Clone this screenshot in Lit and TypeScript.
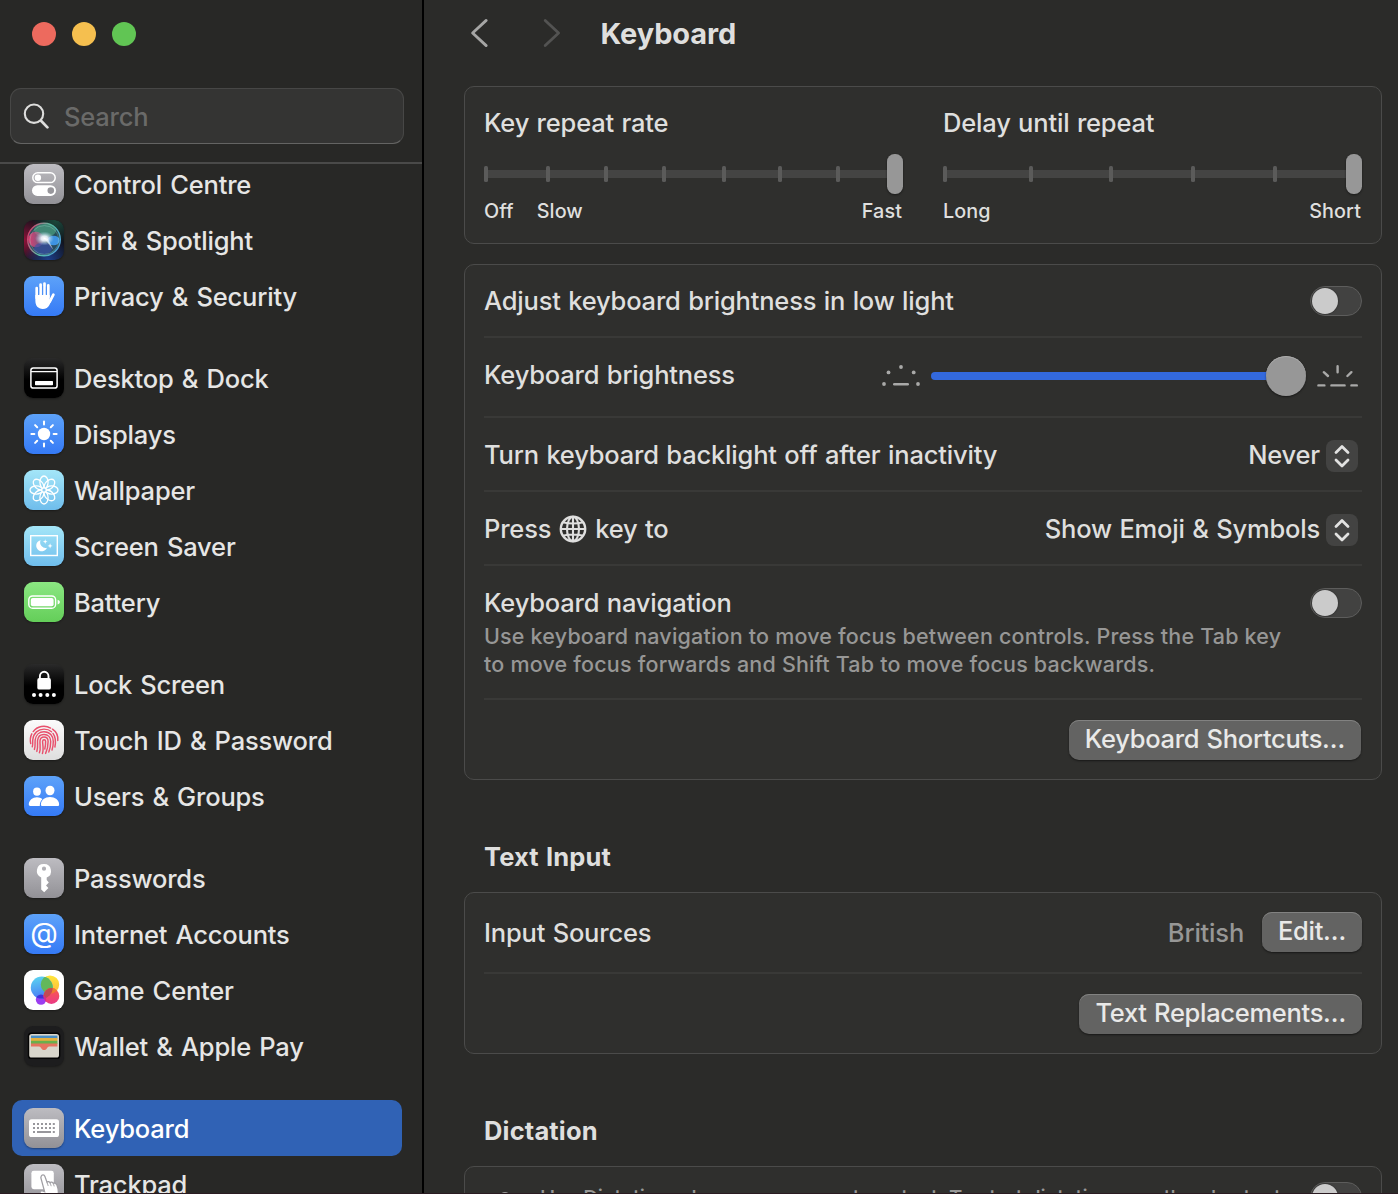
import { LitElement, html, css, svg, nothing } from "lit";
import { customElement, property } from "lit/decorators.js";
import { classMap } from "lit/directives/class-map.js";

interface SidebarEntry {
  label: string;
  icon: string;
  selected?: boolean;
}

const GROUPS: SidebarEntry[][] = [
  [
    { label: "Control Centre", icon: "control" },
    { label: "Siri & Spotlight", icon: "siri" },
    { label: "Privacy & Security", icon: "privacy" },
  ],
  [
    { label: "Desktop & Dock", icon: "desktop" },
    { label: "Displays", icon: "displays" },
    { label: "Wallpaper", icon: "wallpaper" },
    { label: "Screen Saver", icon: "saver" },
    { label: "Battery", icon: "battery" },
  ],
  [
    { label: "Lock Screen", icon: "lock" },
    { label: "Touch ID & Password", icon: "touch" },
    { label: "Users & Groups", icon: "users" },
  ],
  [
    { label: "Passwords", icon: "key" },
    { label: "Internet Accounts", icon: "at" },
    { label: "Game Center", icon: "game" },
    { label: "Wallet & Apple Pay", icon: "wallet" },
  ],
  [
    { label: "Keyboard", icon: "keyboard", selected: true },
    { label: "Trackpad", icon: "trackpad" },
  ],
];

const rays = [0, 45, 90, 135, 180, 225, 270, 315];

const GLYPHS: Record<string, unknown> = {
  control: svg`
    <rect x="8.8" y="8.8" width="22.4" height="9.8" rx="4.9" fill="none" stroke="#fff" stroke-width="1.5"/>
    <circle cx="13.9" cy="13.7" r="3.2" fill="#fff"/>
    <rect x="8" y="21.3" width="24" height="10.6" rx="5.3" fill="#fff"/>
    <circle cx="26.8" cy="26.6" r="3.3" fill="#98979c"/>`,
  siri: svg`
    <defs>
      <radialGradient id="s1" cx="0" cy="0.5" r="0.6"><stop offset="0" stop-color="#8f1239"/><stop offset="1" stop-color="#8f1239" stop-opacity="0"/></radialGradient>
      <radialGradient id="s2" cx="0.8" cy="0" r="0.6"><stop offset="0" stop-color="#1c4a3c"/><stop offset="1" stop-color="#1c4a3c" stop-opacity="0"/></radialGradient>
      <radialGradient id="s3" cx="0.6" cy="1" r="0.6"><stop offset="0" stop-color="#1d3f8c"/><stop offset="1" stop-color="#1d3f8c" stop-opacity="0"/></radialGradient>
      <radialGradient id="s4"><stop offset="0" stop-color="#fff"/><stop offset="0.35" stop-color="#f0f8ff" stop-opacity="0.9"/><stop offset="1" stop-color="#a8d0e8" stop-opacity="0"/></radialGradient>
      <linearGradient id="s5" x1="0" x2="1" y1="0.3" y2="0.7"><stop offset="0" stop-color="#d2406e"/><stop offset="0.5" stop-color="#5cc0a4"/><stop offset="1" stop-color="#4aa0dc"/></linearGradient>
      <linearGradient id="s6" x1="0" x2="1"><stop offset="0" stop-color="#e0386c"/><stop offset="1" stop-color="#c86ca8" stop-opacity="0.3"/></linearGradient>
    </defs>
    <rect width="40" height="40" rx="9" fill="#11121b"/>
    <rect width="40" height="40" rx="9" fill="url(#s1)"/>
    <rect width="40" height="40" rx="9" fill="url(#s2)"/>
    <rect width="40" height="40" rx="9" fill="url(#s3)"/>
    <circle cx="20" cy="19.5" r="16.3" fill="#2e5a68" fill-opacity="0.75" stroke="url(#s5)" stroke-width="1.4"/>
    <ellipse cx="21" cy="10.5" rx="11" ry="6.6" fill="#4fa886" fill-opacity="0.65"/>
    <circle cx="12" cy="19.5" r="7.8" fill="url(#s6)"/>
    <ellipse cx="29.5" cy="20.5" rx="6.2" ry="4.8" fill="#3f97ea" fill-opacity="0.95"/>
    <ellipse cx="19" cy="28.5" rx="9" ry="6" fill="#3a4fae" fill-opacity="0.6"/>
    <circle cx="20.4" cy="20" r="14.4" fill="none" stroke="#9adfd0" stroke-opacity="0.4" stroke-width="0.8"/>
    <ellipse cx="20.5" cy="18.5" rx="9.5" ry="7" fill="url(#s4)"/>
    <path d="M19 17L29.5 30L24 19Z" fill="#fff" fill-opacity="0.55"/>`,
  privacy: svg`
    <g stroke="#fff" stroke-linecap="round" fill="none">
      <path d="M12.7 12V22M16.6 8.6V20M20.5 7.6V20M24.3 9.4V21" stroke-width="2.7"/>
      <path d="M29.4 18.6L25.8 25.6" stroke-width="2.7"/>
    </g>
    <path d="M11.35 19H25.7V23.5L28 22.5C27.2 25 26.4 27.3 25.4 29C23.9 31.7 22 33 18.8 33C14 33 11.35 29.8 11.35 24.6Z" fill="#fff"/>
    <path d="M14.65 11V18.5M18.55 10V18M22.4 10.5V18.5" stroke="#4c90f7" stroke-width="1.1"/>`,
  desktop: svg`
    <rect x="6.9" y="9.9" width="26.2" height="20.2" rx="2.4" fill="none" stroke="#fff" stroke-width="1.5"/>
    <path d="M7 13.6H33" stroke="#fff" stroke-width="1.2"/>
    <rect x="11" y="23" width="18" height="4.2" rx="0.8" fill="#fff"/>`,
  displays: svg`
    <circle cx="20" cy="20" r="6.2" fill="#fff"/>
    ${rays.map((a) => svg`<path d="M20 7.4V10.4" transform="rotate(${a} 20 20)" stroke="#fff" stroke-width="2" stroke-linecap="round"/>`)}`,
  wallpaper: svg`
    <g fill="none" stroke="#fff" stroke-width="1.3">
      ${rays.map((a) => svg`<ellipse cx="20" cy="12.3" rx="4.1" ry="6.3" transform="rotate(${a} 20 20)"/>`)}
    </g>
    <circle cx="20" cy="20" r="2.2" fill="#8acdf0" stroke="#fff" stroke-width="1.2"/>`,
  saver: svg`
    <rect x="6.7" y="9.7" width="26.6" height="19.8" fill="none" stroke="#fff" stroke-width="1.4"/>
    <path d="M16.6 14.2A5.6 5.6 0 1 0 23 21.8A5.6 5.6 0 0 1 16.6 14.2Z" fill="#fff"/>
    <path d="M21.2 13.2L21.8 15.1L23.5 15.7L21.8 16.3L21.2 18.1L20.6 16.3L18.9 15.7L20.6 15.1Z" fill="#fff"/>
    <path d="M26.1 17.2L26.8 19.2L28.7 19.9L26.8 20.6L26.1 22.5L25.4 20.6L23.5 19.9L25.4 19.2Z" fill="#fff"/>`,
  battery: svg`
    <rect x="4.8" y="14" width="26.8" height="12.2" rx="3.8" fill="none" stroke="#fff" stroke-width="1.4"/>
    <rect x="6.8" y="16" width="22.8" height="8.2" rx="2" fill="#fff"/>
    <path d="M33.6 17.8C36.6 18.6 36.6 21.6 33.6 22.4Z" fill="#fff"/>`,
  lock: svg`
    <path d="M15.9 15V12.3A4.3 4.6 0 0 1 24.5 12.3V15" fill="none" stroke="#fff" stroke-width="1.9"/>
    <rect x="13.3" y="14" width="13.6" height="11.6" rx="1.9" fill="#fff"/>
    ${[10, 16.6, 23.3, 29.9].map((x) => svg`<circle cx="${x}" cy="30.9" r="2" fill="#fff"/>`)}`,
  touch: svg`
    <g fill="none" stroke="#e8506c" stroke-width="1.45" stroke-linecap="round">
      <path d="M9.2 11.6A13.4 13.4 0 0 1 26.6 8.1"/>
      <path d="M28.5 9.2C32.4 11.8 34.2 16 33.8 20.5"/>
      <path d="M6.7 23.6C5.9 19.6 6.3 16.6 7.8 13.8"/>
      <path d="M8.3 26.8C9 24.9 8.5 22.3 8.8 19.6C9.5 12.9 14.2 9.1 20 9.1C23 9.1 25.6 10 27.5 11.7"/>
      <path d="M29 13.4C32 17.6 31.8 22.8 30.9 27"/>
      <path d="M10.4 29.4C11.6 26.5 10.8 23 11.2 19.9C11.8 14.8 15.4 11.8 20 11.8C25.8 11.8 29.3 16 29.3 21.4C29.3 24.5 28.9 27.4 28 30"/>
      <path d="M12.8 31.4C14.3 27.8 13.2 23.6 13.6 20.2C14 16.6 16.6 14.4 20 14.4C24.2 14.4 26.7 17.4 26.7 21.4C26.7 25.4 26 29 24.8 32"/>
      <path d="M15.4 32.8C17 29 15.7 24.4 16 20.9C16.2 18.5 17.8 17 20 17C22.6 17 24.1 18.9 24.1 21.4C24.1 25.8 23.2 30 21.6 33.4"/>
      <path d="M18.4 33.5C20 29.4 18.5 24 18.6 21.3C18.8 19.2 21.5 19.2 21.6 21.4C21.7 24.4 21.3 27 20.8 29"/>
    </g>`,
  users: svg`
    <ellipse cx="13" cy="15.6" rx="3.9" ry="4.2" fill="#fff"/>
    <path d="M4.8 28.6C4.8 24.4 8.6 21.3 13 21.3C15.2 21.3 17 22 18.4 23.2C16.6 24.8 15.8 26.8 15.8 30H6.4C5.3 30 4.8 29.6 4.8 28.6Z" fill="#fff"/>
    <ellipse cx="26" cy="14.5" rx="4.5" ry="4.8" fill="#fff"/>
    <path d="M16.9 28.4C16.9 24.2 21 21 26 21C31 21 35.1 24.2 35.1 28.4C35.1 29.6 34.5 30 33.4 30H18.6C17.5 30 16.9 29.6 16.9 28.4Z" fill="#fff"/>`,
  key: svg`
    <path fill-rule="evenodd" d="M20 6.1A6.9 6.9 0 0 0 17.2 19.4V31.4L20.2 34.3L24.4 30L22 27.4L24.8 24.5L22.7 22V19.4A6.9 6.9 0 0 0 20 6.1ZM20 8.6A2.1 2.1 0 1 1 20 12.8A2.1 2.1 0 0 1 20 8.6Z" fill="#fff"/>`,
  at: svg`<text x="20" y="29.2" text-anchor="middle" font-family="Inter, sans-serif" font-size="28.5" font-weight="400" letter-spacing="0" fill="#fff">@</text>`,
  game: svg`
    <defs>
      <linearGradient id="g1" x1="0" x2="0.2" y1="0" y2="1"><stop offset="0" stop-color="#5bd8f0"/><stop offset="1" stop-color="#4b7ff5"/></linearGradient>
      <linearGradient id="g2" x1="0" x2="0" y1="0" y2="1"><stop offset="0" stop-color="#ffe63b"/><stop offset="1" stop-color="#fbb83a"/></linearGradient>
      <linearGradient id="g3" x1="0" x2="0" y1="0" y2="1"><stop offset="0" stop-color="#fb5a4a"/><stop offset="1" stop-color="#ea3a86"/></linearGradient>
      <clipPath id="gb"><circle cx="17.8" cy="17.6" r="11"/></clipPath>
      <clipPath id="gr"><circle cx="27.4" cy="26" r="7.9"/></clipPath>
    </defs>
    <circle cx="17" cy="29.6" r="5.2" fill="#9b3df0"/>
    <circle cx="26" cy="14.6" r="9.2" fill="url(#g2)"/>
    <circle cx="17.8" cy="17.6" r="11" fill="url(#g1)"/>
    <g clip-path="url(#gb)"><circle cx="26" cy="14.6" r="9.2" fill="#63b85a"/><circle cx="17" cy="29.6" r="5.2" fill="#4430d8"/></g>
    <circle cx="27.4" cy="26" r="7.9" fill="url(#g3)"/>
    <g clip-path="url(#gr)"><circle cx="26" cy="14.6" r="9.2" fill="#ef7a32"/><circle cx="17.8" cy="17.6" r="11" fill="#c44a52"/><circle cx="17" cy="29.6" r="5.2" fill="#d42a90"/></g>`,
  wallet: svg`
    <rect x="3.8" y="6.6" width="32.6" height="26.4" rx="3.6" fill="#050505"/>
    <rect x="5.2" y="8" width="29.8" height="23.6" rx="2.6" fill="#d9d6cc"/>
    <rect x="7" y="9.6" width="26.4" height="3" fill="#4a8fc4"/>
    <rect x="7" y="12" width="26.4" height="3" fill="#e5b03f"/>
    <rect x="7" y="14.8" width="26.4" height="3.2" fill="#68b04c"/>
    <path d="M7 17.6H33.4V20.4H25.2C23.9 20.4 23.6 21.2 22.8 22.4C21.3 24.4 18.9 24.4 17.4 22.4C16.6 21.2 16.3 20.4 15 20.4H7Z" fill="#e5735f"/>`,
  keyboard: svg`
    <rect x="5" y="11.2" width="30" height="17.8" rx="2.6" fill="#fff"/>
    <g fill="#98979c">
      ${[9, 13, 17, 21, 25, 28.8].map((x) => svg`<rect x="${x}" y="15" width="2" height="2"/><rect x="${x}" y="19" width="2" height="2"/>`)}
      <rect x="9" y="23" width="2" height="2"/><rect x="13" y="23" width="14" height="2"/><rect x="28.8" y="23" width="2" height="2"/>
    </g>`,
  trackpad: svg`
    <rect x="7.4" y="6.8" width="22.4" height="18.4" rx="2.4" fill="#fff"/>
    <path d="M17.2 12.2C18 10.4 20.2 10.6 20.9 12.4L23 18.2C24 17.2 25.4 17.4 26 18.6C27 17.7 28.6 18 29.2 19.3C31 18.6 32.3 19.5 33 21.2C34.4 25 35 28.4 33.6 31.5L30 37H24C21.4 34.6 18.4 31.6 16.4 29.4C15.4 28 16.6 26.4 18.4 26.8L20.6 27.6L17 14.4C16.8 13.6 16.9 12.8 17.2 12.2Z" fill="#fff" stroke="#a09fa4" stroke-width="1.3"/>
    <path d="M23.2 18.6L24.2 22M26.2 18.8L27.2 22.2M29.4 19.6L30.2 22.4" stroke="#a09fa4" stroke-width="0.9" fill="none"/>`,
};

@customElement("sidebar-item")
class SidebarItem extends LitElement {
  @property() label = "";
  @property() icon = "";
  @property({ type: Boolean }) selected = false;

  static styles = css`
    :host { display: block; }
    .item {
      display: flex; align-items: center; box-sizing: border-box; height: 56px;
      padding-left: 12px; gap: 10px; border-radius: 10px; color: #e6e6e5;
      white-space: nowrap; word-spacing: 1.6px;
    }
    .selected { background: #3062b5; color: #fff; }
    .label { padding-top: 2px; line-height: 36px; }
    .tile {
      flex: none; width: 40px; height: 40px; border-radius: 9px; display: block;
      box-shadow: 0 1px 2px rgba(0, 0, 0, 0.35);
    }
    .control, .key, .keyboard, .trackpad { background: linear-gradient(#bdbcc1, #929196); }
    .privacy, .displays, .users, .at { background: linear-gradient(#5da2f9, #357af6); }
    .desktop, .lock { background: linear-gradient(#2a2a2a, #000 55%); }
    .wallpaper, .saver { background: linear-gradient(#a4e6f8, #6fbdec); }
    .battery { background: linear-gradient(#8be782, #64ce59); }
    .touch { background: linear-gradient(#fbfbfb, #dedede); }
    .game { background: #fff; }
    .wallet { background: #1d1d1e; }
  `;

  render() {
    return html`<div class=${classMap({ item: true, selected: this.selected })}>
      <svg class="tile ${this.icon}" viewBox="0 0 40 40">${GLYPHS[this.icon] ?? nothing}</svg>
      <span class="label">${this.label}</span>
    </div>`;
  }
}

@customElement("toggle-switch")
class ToggleSwitch extends LitElement {
  static styles = css`
    :host { display: block; flex: none; }
    .track {
      box-sizing: border-box; width: 52px; height: 30px; border-radius: 15px; padding: 1px;
      border: 1px solid #5d5d5c; background: #424241;
    }
    .knob { width: 26px; height: 26px; border-radius: 50%; background: #cbcbcb; box-shadow: 0 0 2px rgba(0, 0, 0, 0.5); }
  `;

  render() {
    return html`<div class="track"><div class="knob"></div></div>`;
  }
}

@customElement("tick-slider")
class TickSlider extends LitElement {
  @property({ attribute: false }) ticks: number[] = [];

  static styles = css`
    :host { display: block; height: 40px; }
    .slider { display: block; overflow: visible; }
    .thumb { filter: drop-shadow(0 1px 1px rgba(0, 0, 0, 0.45)); }
  `;

  render() {
    return html`<svg class="slider" width="419" height="40" viewBox="0 0 419 40">
      <rect x="1" y="16" width="412" height="8" fill="#444443"/>
      ${this.ticks.map((x) => svg`<rect x=${x} y="12" width="4" height="16" rx="1.5" fill="#5b5b5a"/>`)}
      <rect class="thumb" x="403" y="0" width="16" height="40" rx="7.5" fill="#979797"/>
    </svg>`;
  }
}

@customElement("popup-value")
class PopupValue extends LitElement {
  @property() value = "";

  static styles = css`
    :host { display: flex; align-items: center; gap: 6px; padding-right: 4px; }
    .stepper { display: block; width: 32px; height: 32px; border-radius: 8px; background: #434342; margin-top: 2px; }
  `;

  render() {
    return html`<span>${this.value}</span>
      <svg class="stepper" viewBox="0 0 32 32">
        <path d="M10 12.6L16 6.6L22 12.6M10 20L16 26L22 20" fill="none" stroke="#e2e2e1" stroke-width="2.8" stroke-linecap="round" stroke-linejoin="round"/>
      </svg>`;
  }
}

@customElement("app-root")
class AppRoot extends LitElement {
  static styles = css`
    :host {
      display: block; font-family: Inter, "Liberation Sans", sans-serif; font-size: 25.5px;
      font-weight: 450; letter-spacing: -0.19px; word-spacing: 0.9px; color: #dfdfde;
    }
    .window {
      box-sizing: border-box; display: flex; width: 1398px; height: 1194px; overflow: hidden;
      background: #2b2b29; border-bottom: 1px solid #2a1b21;
    }
    .sidebar {
      box-sizing: border-box; flex: none; display: flex; flex-direction: column;
      width: 424px; border-right: 2px solid #000; background: #282826;
    }
    .top {
      flex: none; box-sizing: border-box; height: 164px; padding: 22px 18px 0 10px;
      border-bottom: 2px solid #4a4a49;
    }
    .lights { display: flex; gap: 16px; padding-left: 22px; }
    .light { width: 24px; height: 24px; border-radius: 50%; }
    .close { background: #ed6a5e; }
    .min { background: #f5bf4f; }
    .max { background: #61c554; }
    .search {
      box-sizing: border-box; display: flex; align-items: center; gap: 15px; height: 56px;
      margin-top: 42px; padding-left: 12px; border: 1px solid #474746; border-bottom: 1.5px solid #646463;
      border-radius: 11px; background: #343433; color: #6a6a69;
    }
    .list {
      flex: 1; min-height: 0; overflow: hidden; display: flex; flex-direction: column;
      padding: 0 20px 0 12px; gap: 26px;
    }
    .group { flex: none; }
    .group:first-child { margin-top: -8px; }
    .main { flex: 1; min-width: 0; padding: 0 16px 0 40px; overflow: hidden; }
    .header { display: flex; align-items: center; height: 66px; padding-left: 6px; margin-bottom: 20px; }
    .chevrons { flex: none; display: block; }
    .title { margin: 0 0 0 39.5px; font-size: 29px; font-weight: 700; letter-spacing: -0.1px; }
    .card {
      box-sizing: border-box; width: 918px; border: 1px solid #4b4b4a; border-radius: 10px;
      background: #2f2f2d; padding: 0 19px;
    }
    .repeat { display: grid; grid-template-columns: 419px 419px; column-gap: 40px; height: 158px; padding-top: 19px; }
    .field { line-height: 34px; }
    .field tick-slider { margin-top: 14px; }
    .captions { display: flex; gap: 23px; margin-top: 5px; line-height: 24px; font-size: 19.8px; letter-spacing: 0.1px; padding-right: 1px; }
    .push { margin-left: auto; }
    .general { height: 516px; margin-top: 20px; }
    .row {
      box-sizing: border-box; display: flex; align-items: center; justify-content: space-between;
      height: 74px; border-bottom: 2px solid #393937; line-height: 36px; padding-top: 2px; white-space: nowrap;
    }
    .row.first { height: 73px; padding-top: 1px; }
    .row.level { height: 80px; padding: 0 0 4px; }
    .row.nav { height: 134px; align-items: flex-start; padding-top: 19px; }
    .row.nav toggle-switch { margin-top: 3px; }
    .row.actions { height: 79px; border-bottom: 0; padding: 0; }
    .note {
      font-size: 21.5px; line-height: 28px; letter-spacing: 0.19px; word-spacing: 0; color: #979796;
      white-space: pre; padding-top: 1px;
    }
    .brightness { display: flex; align-items: center; margin-top: 2px; }
    .rail { width: 345px; height: 8px; margin-left: 10px; border-radius: 4px; background: #3369dd; }
    .knob { width: 40px; height: 40px; border-radius: 50%; background: #979797; margin: 0 11px 0 -10px; box-shadow: 0 1px 2px rgba(0, 0, 0, 0.5), inset 0 1px 0 #aaa; }
    .bright { margin-right: 4px; }
    .globekey { display: flex; align-items: center; gap: 8px; }
    .button {
      box-sizing: border-box; height: 40px; padding: 0 16px; border-radius: 10px; background: #636362;
      color: #e9e9e8; line-height: 38px; letter-spacing: -0.3px;
      box-shadow: 0 1px 2px rgba(0, 0, 0, 0.5), inset 0 1px 0 #828281;
    }
    .shortcuts { margin-right: 1px; }
    .section { margin: 0; padding: 59px 0 17px 20px; font-size: 25.5px; letter-spacing: 0.15px; line-height: 36px; font-weight: 700; }
    .sources { height: 162px; }
    .row.input { height: 81px; padding: 0; }
    .value { display: flex; align-items: center; gap: 18px; color: #979796; }
    .value .button { margin-bottom: 2px; }
    .dictation { height: 120px; display: flex; padding-top: 15px; }
    .mic { flex: none; display: block; margin: 10px 29px 0 15px; }
    .dictation .note { padding-top: 2px; font-size: 20.5px; letter-spacing: -0.14px; }
  `;

  render() {
    return html`<div class="window">
      <aside class="sidebar">
        <div class="top">
          <div class="lights">
            <span class="light close"></span><span class="light min"></span><span class="light max"></span>
          </div>
          <div class="search">
            <svg width="26" height="26" viewBox="0 0 26 26" fill="none" stroke="#dededd" stroke-linecap="round">
              <circle cx="11" cy="10.7" r="9.2" stroke-width="2.1"/><path d="M18 17.8L24.4 24.4" stroke-width="2.7"/>
            </svg>
            <span>Search</span>
          </div>
        </div>
        <nav class="list">
          ${GROUPS.map((group) => html`<div class="group">
            ${group.map((e) => html`<sidebar-item .label=${e.label} .icon=${e.icon} .selected=${!!e.selected}></sidebar-item>`)}
          </div>`)}
        </nav>
      </aside>
      <main class="main">
        <header class="header">
          <svg class="chevrons" width="91" height="30" viewBox="0 0 91 30" fill="none" stroke-width="2.8" stroke-linecap="round" stroke-linejoin="round">
            <path d="M16.2 2.4L2.6 15L16.2 27.6" stroke="#a6a6a5"/><path d="M75.2 2.4L88.6 15L75.2 27.6" stroke="#535352"/>
          </svg>
          <h1 class="title">Keyboard</h1>
        </header>

        <section class="card repeat">
          <div class="field">
            <div>Key repeat rate</div>
            <tick-slider .ticks=${[0, 62, 120, 178, 238, 294, 352]}></tick-slider>
            <div class="captions"><span>Off</span><span>Slow</span><span class="push">Fast</span></div>
          </div>
          <div class="field">
            <div>Delay until repeat</div>
            <tick-slider .ticks=${[0, 86, 166, 248, 330]}></tick-slider>
            <div class="captions"><span>Long</span><span class="push">Short</span></div>
          </div>
        </section>

        <section class="card general">
          <div class="row first"><span>Adjust keyboard brightness in low light</span><toggle-switch></toggle-switch></div>
          <div class="row level">
            <span>Keyboard brightness</span>
            <div class="brightness">
              <svg width="40" height="24" viewBox="0 0 40 24" fill="#a9a9a8">
                <circle cx="3" cy="20" r="1.9"/><circle cx="7.5" cy="8.4" r="1.9"/><circle cx="20" cy="3" r="1.9"/>
                <circle cx="32.7" cy="8.4" r="1.9"/><circle cx="37" cy="20" r="1.9"/><rect x="12" y="19" width="16" height="2.6" rx="1.3"/>
              </svg>
              <div class="rail"></div><div class="knob"></div>
              <svg class="bright" width="41" height="24" viewBox="0 0 41 24" fill="none" stroke="#a9a9a8" stroke-width="2.4" stroke-linecap="round">
                <path d="M1.4 21.4H7.4M14.4 21.4H27.6M34.4 21.4H39.8M20.6 2.2V8.2M6.8 8.2L11 12M34.4 8.2L30.4 12"/>
              </svg>
            </div>
          </div>
          <div class="row"><span>Turn keyboard backlight off after inactivity</span><popup-value value="Never"></popup-value></div>
          <div class="row">
            <div class="globekey"><span>Press</span>
              <svg width="28" height="28" viewBox="0 0 28 28" fill="none" stroke="#dfdfde" stroke-width="2.1">
                <circle cx="14" cy="14" r="12.2" stroke-width="2.4"/><ellipse cx="14" cy="14" rx="6" ry="12.2"/>
                <path d="M14 1.7V26.3M1.7 14H26.3M3.8 7.2Q14 9.8 24.2 7.2M3.8 20.8Q14 18.2 24.2 20.8"/>
              </svg>
              <span>key to</span></div>
            <popup-value value="Show Emoji &amp; Symbols"></popup-value>
          </div>
          <div class="row nav">
            <div><div>Keyboard navigation</div><div class="note">Use keyboard navigation to move focus between controls. Press the Tab key
to move focus forwards and Shift Tab to move focus backwards.</div></div>
            <toggle-switch></toggle-switch>
          </div>
          <div class="row actions"><span></span><div class="button shortcuts">Keyboard Shortcuts…</div></div>
        </section>

        <h2 class="section">Text Input</h2>
        <section class="card sources">
          <div class="row input"><span>Input Sources</span>
            <div class="value"><span>British</span><div class="button">Edit…</div></div>
          </div>
          <div class="row actions"><span></span><div class="button">Text Replacements…</div></div>
        </section>

        <h2 class="section">Dictation</h2>
        <section class="card dictation">
          <svg class="mic" width="12" height="24" viewBox="0 0 12 24"><rect width="12" height="22" rx="6" fill="#979796"/></svg>
          <div class="note">Use Dictation wherever you can type text. To start dictating, use the shortcut</div>
          <toggle-switch class="push"></toggle-switch>
        </section>
      </main>
    </div>`;
  }
}
